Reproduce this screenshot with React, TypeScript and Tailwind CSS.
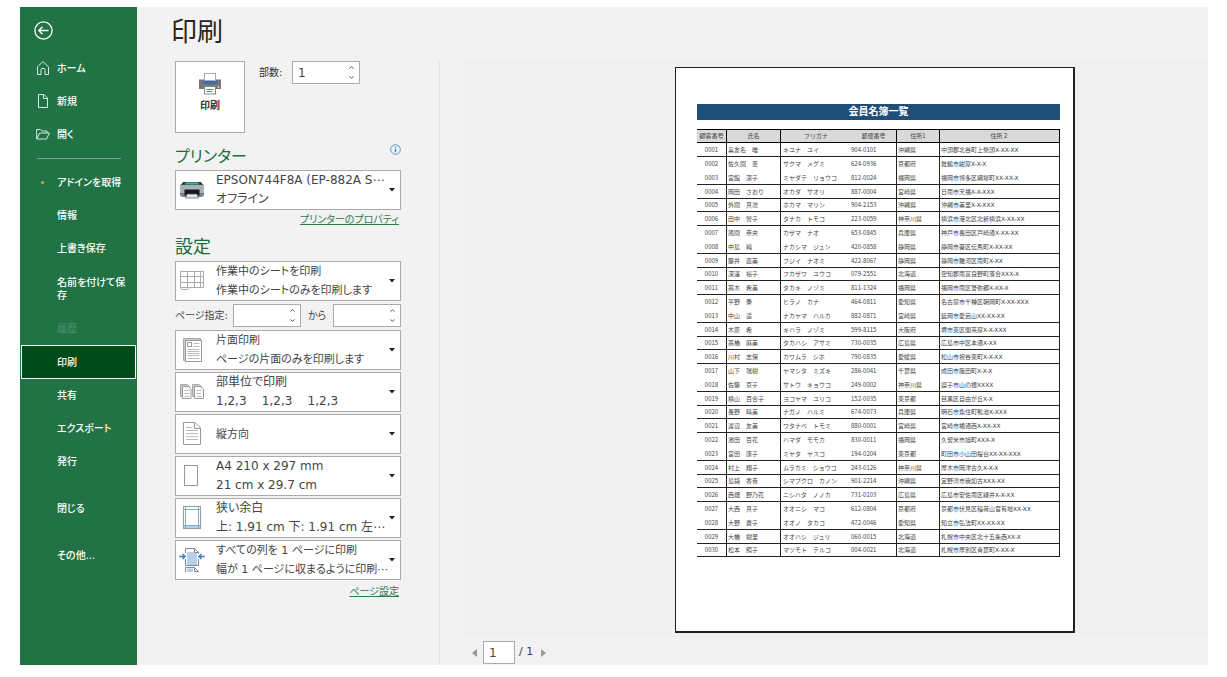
import type { ReactNode } from "react";

type Member = [string, string, string, string, string, string];

const members: Member[] = [
  ["0001", "喜友名　唯", "キユナ　ユイ", "904-0101", "沖縄県", "中頭郡北谷町上勢頭X-XX-XX"],
  ["0002", "佐久間　恵", "サクマ　メグミ", "624-0936", "京都府", "舞鶴市紺屋X-X-X"],
  ["0003", "宮館　涼子", "ミヤダテ　リョウコ", "812-0024", "福岡県", "福岡市博多区綱場町XX-XX-X"],
  ["0004", "岡田　さおり", "オカダ　サオリ", "887-0004", "宮崎県", "日南市天福X-X-XXX"],
  ["0005", "外間　真凛", "ホカマ　マリン", "904-2153", "沖縄県", "沖縄市美里X-X-XXX"],
  ["0006", "田中　智子", "タナカ　トモコ", "223-0059", "神奈川県", "横浜市港北区北新横浜X-XX-XX"],
  ["0007", "風間　奈央", "カザマ　ナオ", "653-0845", "兵庫県", "神戸市長田区戸崎通X-XX-XX"],
  ["0008", "中島　純", "ナカシマ　ジュン", "420-0858", "静岡県", "静岡市葵区伝馬町X-XX-XX"],
  ["0009", "藤井　直美", "フジイ　ナオミ", "422-8067", "静岡県", "静岡市駿河区南町X-XX"],
  ["0010", "深澤　裕子", "フカザワ　ユウコ", "079-2551", "北海道", "空知郡南富良野町落合XXX-X"],
  ["0011", "髙木　希美", "タカキ　ノゾミ", "811-1324", "福岡県", "福岡市南区警弥郷X-XX-X"],
  ["0012", "平野　奏", "ヒラノ　カナ", "464-0811", "愛知県", "名古屋市千種区朝岡町X-XX-XXX"],
  ["0013", "中山　遥", "ナカヤマ　ハルカ", "882-0871", "宮崎県", "延岡市愛宕山XX-XX-XX"],
  ["0014", "木原　希", "キハラ　ノゾミ", "599-8115", "大阪府", "堺市東区関茶屋X-X-XXX"],
  ["0015", "髙橋　麻美", "タカハシ　アサミ", "730-0035", "広島県", "広島市中区本通X-XX"],
  ["0016", "川村　志保", "カワムラ　シホ", "790-0835", "愛媛県", "松山市祝谷東町X-X-XX"],
  ["0017", "山下　瑞樹", "ヤマシタ　ミズキ", "286-0041", "千葉県", "成田市飯田町X-X-X"],
  ["0018", "佐藤　京子", "サトウ　キョウコ", "249-0002", "神奈川県", "逗子市山の根XXXX"],
  ["0019", "横山　百合子", "ヨコヤマ　ユリコ", "152-0035", "東京都", "目黒区自由が丘X-X"],
  ["0020", "長野　晴美", "ナガノ　ハルミ", "674-0073", "兵庫県", "明石市魚住町鴨池X-XXX"],
  ["0021", "渡辺　友美", "ワタナベ　トモミ", "880-0001", "宮崎県", "宮崎市橘通西X-XX-XX"],
  ["0022", "濱田　百花", "ハマダ　モモカ", "830-0011", "福岡県", "久留米市旭町XXX-X"],
  ["0023", "宮田　康子", "ミヤタ　ヤスコ", "194-0204", "東京都", "町田市小山田桜台XX-XX-XXX"],
  ["0024", "村上　翔子", "ムラカミ　ショウコ", "243-0126", "神奈川県", "厚木市岡津古久X-X-X"],
  ["0025", "島袋　香音", "シマブクロ　カノン", "901-2214", "沖縄県", "宜野湾市我如古XXX-XX"],
  ["0026", "西畑　野乃花", "ニシハタ　ノノカ", "731-0103", "広島県", "広島市安佐南区緑井X-X-XX"],
  ["0027", "大西　真子", "オオニシ　マコ", "612-0804", "京都府", "京都市伏見区稲荷山官有地XX-XX"],
  ["0028", "大野　貴子", "オオノ　タカコ", "472-0046", "愛知県", "知立市弘法町XX-XX-XX"],
  ["0029", "大橋　樹里", "オオハシ　ジュリ", "060-0015", "北海道", "札幌市中央区北十五条西XX-X"],
  ["0030", "松本　照子", "マツモト　テルコ", "004-0021", "北海道", "札幌市厚別区青葉町X-XX-X"],
];

const HomeIcon = () => (
  <svg width="14" height="16" viewBox="0 1 14 16" fill="none" stroke="#d5eadc" strokeWidth="1">
    <path d="M1.500 6.800 7 1.600l5.500 5.200V14.500H9V9.500a1 1 0 0 0-1-1H6a1 1 0 0 0-1 1v5H1.500Z" />
  </svg>
);

const NewIcon = () => (
  <svg width="14" height="16" viewBox="0 1 14 16" fill="none" stroke="#d5eadc" strokeWidth="1">
    <path d="M2.500 1.500H8L11.500 5V14.500H2.500ZM7.500 1.500V5.500H11.500" />
  </svg>
);

const OpenIcon = () => (
  <svg width="14" height="16" viewBox="0 1 14 16" fill="none" stroke="#d5eadc" strokeWidth="1">
    <path d="M.7 13V3.500H4.500L6 5H11V7M.7 13 3.800 7H13.400L10.600 13Z" />
  </svg>
);

function NavItem({ children, icon, tall }: { children: ReactNode; icon?: ReactNode; tall?: boolean }) {
  return (
    <button
      type="button"
      className={`flex w-full items-center pl-4 pr-3 text-left text-[10px] leading-[13px] font-medium ${tall ? "h-[47px]" : "h-[33px]"}`}
    >
      <span className="flex w-[21px] shrink-0 items-center">{icon}</span>
      <span className="whitespace-nowrap">{children}</span>
    </button>
  );
}

function Sidebar() {
  return (
    <nav className="flex w-[117px] shrink-0 flex-col bg-[#217346] text-white">
      <button type="button" aria-label="戻る" className="mt-3.5 ml-3.5 size-[19px]">
        <svg width="19" height="19" viewBox="0 0 19 19" fill="none" stroke="#fff" strokeWidth="1.300">
          <circle cx="9.500" cy="9.500" r="8.600" />
          <path d="M14.500 9.500H5M8.500 5.800 4.800 9.500l3.700 3.700" />
        </svg>
      </button>
      <div className="h-3" />
      <NavItem icon={<HomeIcon />}>ホーム</NavItem>
      <NavItem icon={<NewIcon />}>新規</NavItem>
      <NavItem icon={<OpenIcon />}>開く</NavItem>
      <hr className="my-[7px] mr-4 ml-[17px] border-t border-[#6fa886]" />
      <NavItem icon={<span className="ml-[5px] size-[3px] rounded-full bg-[#e8a325]" />}>アドインを取得</NavItem>
      <NavItem>情報</NavItem>
      <NavItem>上書き保存</NavItem>
      <NavItem tall>
        名前を付けて保
        <br />存
      </NavItem>
      <button type="button" disabled className="h-[33px] pl-[37px] text-left text-[10px] text-[#4f9069]">
        履歴
      </button>
      <button
        type="button"
        aria-current="page"
        className="mx-px h-[34px] border border-white bg-[#004b1c] pl-[35px] text-left text-[10px] font-medium"
      >
        印刷
      </button>
      <NavItem>共有</NavItem>
      <NavItem>エクスポート</NavItem>
      <NavItem>発行</NavItem>
      <div className="h-3.5" />
      <NavItem>閉じる</NavItem>
      <div className="h-3.5" />
      <NavItem>その他...</NavItem>
    </nav>
  );
}

function Spinner({ label, value, id }: { label: string; value: string; id: string }) {
  return (
    <span className="flex h-[23px] w-[68px] border border-[#ababab] bg-white">
      <input
        id={id}
        aria-label={label}
        defaultValue={value}
        className="w-0 min-w-0 flex-1 bg-transparent pl-[5px] text-[12px] text-[#444] outline-none"
      />
      <span className="flex w-4 flex-col">
        <button type="button" aria-label={`${label} 増やす`} className="flex flex-1 items-center justify-center">
          <svg width="5" height="3" viewBox="0 0 5 3" fill="none" stroke="#555"><path d="M.5 2.500 2.500.7l2 1.800" /></svg>
        </button>
        <button type="button" aria-label={`${label} 減らす`} className="flex flex-1 items-center justify-center">
          <svg width="5" height="3" viewBox="0 0 5 3" fill="none" stroke="#555"><path d="M.5.500l2 1.800 2-1.800" /></svg>
        </button>
      </span>
    </span>
  );
}

function Picker({ icon, title, detail, compact }: { icon: ReactNode; title: string; detail?: string; compact?: boolean }) {
  return (
    <button
      type="button"
      aria-haspopup="listbox"
      className={`flex h-10 w-full items-center border border-[#ababab] bg-white text-left leading-[19px] text-[#444] ${compact ? "text-[11px]" : "text-[12px]"}`}
    >
      <span className="flex w-10 shrink-0 items-center pl-[3px]">{icon}</span>
      <span className="min-w-0 flex-1 whitespace-nowrap">
        <span className="block">{title}</span>
        {detail && <span className="block whitespace-pre">{detail}</span>}
      </span>
      <svg className="mr-[5px] shrink-0" width="6" height="4" viewBox="0 0 6 4"><path d="M0 0H6L3 3.500Z" fill="#222" /></svg>
    </button>
  );
}

const PrintIcon = () => (
  <svg width="24" height="22" viewBox="0 0 24 22">
    <path d="M1 6.500H5V10H19V6.500H23V16H1Z" fill="#777" />
    <path d="M5 6.500H19V11H5Z" fill="#3a6ea8" />
    <rect x="6.500" y=".5" width="11" height="7" fill="#fff" stroke="#aaa" />
    <circle cx="20.500" cy="14" r="1" fill="#f6c9a0" />
    <rect x="6.500" y="13.500" width="11" height="7.500" fill="#fff" stroke="#888" />
    <path d="M8.500 16.500H15.500M8.500 18.500H14" stroke="#4a86c8" />
  </svg>
);

const DeviceIcon = () => (
  <svg width="26" height="20" viewBox="0 0 26 20">
    <path d="M4 2H22L25 6H1Z" fill="#3c4246" />
    <path d="M7 2.500H19L20 4.500H6Z" fill="#38b796" />
    <rect x="1" y="5" width="24" height="11" rx="1" fill="#a9b0b6" />
    <path d="M1 13H25V15.500L23 17H3L1 15.500Z" fill="#7b8389" />
    <rect x="5.500" y="9.500" width="15" height="6" fill="#17191b" />
    <path d="M8 14H18L19.500 18H6.500Z" fill="#dfe3e6" stroke="#444" strokeWidth=".6" />
  </svg>
);

const SheetIcon = () => (
  <svg width="26" height="24" viewBox="0 0 26 24" fill="none" stroke="#aaa">
    <path d="M1.500 2.500H24.500V18.500H10.500L8.500 20.500H2.500L1.500 18.500ZM1.500 7.500H24.500M1.500 13.500H24.500M1.500 18.500H10.500M8.500 2.500V18.500M15.500 2.500V18.500M21.500 2.500V18.500" />
  </svg>
);

const OneSideIcon = () => (
  <svg width="26" height="28" viewBox="0 0 26 28" fill="none" stroke="#999">
    <path d="M4.500 24.500V2.500H21.500V24.500Z" fill="#ccc" stroke="#aaa" />
    <rect x="6.500" y="4.500" width="16" height="21" fill="#fff" />
    <path d="M8.500 6.500H12.500V10.500H8.500Z" />
    <path d="M14.500 7.500H20.500M14.500 10.500H20.500M8.500 13.500H20.500M8.500 15.500H20.500M8.500 17.500H20.500M8.500 19.500H20.500M8.500 22.500H20.500" stroke="#bbb" />
  </svg>
);

const CollateIcon = () => (
  <svg width="26" height="18" viewBox="0 0 26 18" fill="none" stroke="#999">
    <path d="M1.500 13.500V1.500H8.500L10.500 3.500V13.500ZM13.500 13.500V1.500H20.500L22.500 3.500V13.500Z" fill="#ccc" stroke="#aaa" />
    <path d="M3.500 3.500H9.500L12 6V15.500H3.500ZM15.500 3.500H21.500L24.500 6V15.500H15.500Z" fill="#fff" />
    <path d="M5.500 7.500H10.500M5.500 10.500H10.500M5.500 13.500H10.500M17.500 7.500H22.500M17.500 10.500H22.500M17.500 13.500H22.500" stroke="#bbb" />
  </svg>
);

const PortraitIcon = () => (
  <svg width="26" height="26" viewBox="0 0 26 26" fill="none" stroke="#999">
    <path d="M4.500 1.500H16L21.500 7V23.500H4.500ZM15.500 1.500V7.500H21.500" />
    <path d="M7 6.500H13M7 9.500H19M7 12.500H19M7 15.500H19M7 18.500H19" stroke="#bbb" />
  </svg>
);

const PaperIcon = () => (
  <svg width="26" height="24" viewBox="0 0 26 24" fill="none" stroke="#999">
    <rect x="5.500" y="1.500" width="13" height="20" />
  </svg>
);

const MarginIcon = () => (
  <svg width="26" height="26" viewBox="0 0 26 26" fill="none">
    <rect x="4.500" y="1.500" width="17" height="22" fill="#fff" stroke="#999" />
    <path d="M5 22H21" stroke="#b9cfe8" strokeWidth="2" />
    <path d="M4 4.500H22M4 20.500H22M6.500 1V24M19.500 1V24" stroke="#7facdf" />
  </svg>
);

const FitIcon = () => (
  <svg width="26" height="26" viewBox="0 0 26 26" fill="none">
    <path d="M8 5H18V18H8Z" fill="#b5cfec" />
    <path d="M6.500 6V1.500H15.500L19.500 5.500V7M6.500 12V18.500H19.500V12" stroke="#888" />
    <path d="M15.500 1.500V5.500H19.500Z" fill="#fff" stroke="#888" />
    <path d="M8 21.500H14V25H8Z" fill="#b5cfec" />
    <path d="M6.500 25V20.500H15.500L19.500 24.500H15.500V20.500" stroke="#888" />
    <path d="M0 9.500H6M3.500 7 6 9.500 3.500 12M26 9.500H20M22.500 7 20 9.500l2.500 2.500" stroke="#3f7fc1" strokeWidth="1.600" />
  </svg>
);

function Settings() {
  return (
    <section className="w-[226px] shrink-0">
      <div className="flex">
        <button
          type="button"
          className="flex h-[72px] w-[70px] flex-col items-center border border-[#ababab] bg-white pt-[11px] text-[10px] leading-4 font-bold text-[#333]"
        >
          <PrintIcon />
          <span className="mt-[3px]">印刷</span>
        </button>
        <label htmlFor="copies" className="ml-3.5 w-[33px] text-[10px] leading-[23px] whitespace-nowrap text-[#333]">
          部数:
        </label>
        <Spinner id="copies" label="部数" value="1" />
      </div>

      <div className="mt-[9px] flex h-7 items-center justify-between">
        <h2 className="pt-0.5 text-[16px] leading-7 text-[#1d6b3e]">プリンター</h2>
        <button type="button" aria-label="プリンターの情報" className="mb-3.5">
          <svg width="11" height="11" viewBox="0 0 11 11" fill="none">
            <circle cx="5.500" cy="5.500" r="4.800" stroke="#4a9ad4" />
            <path d="M5.500 4.800V8.300M5.500 2.500V3.800" stroke="#2b7fc0" strokeWidth="1.300" />
          </svg>
        </button>
      </div>
      <Picker icon={<DeviceIcon />} title="EPSON744F8A (EP-882A S⋯" detail="オフライン" />
      <div className="flex h-5 items-center justify-end pr-0.5">
        <a href="#properties" className="text-[10px] leading-4 text-[#2c7a4e] underline">プリンターのプロパティ</a>
      </div>

      <h2 className="mt-1 mb-px text-[18px] leading-[26px] text-[#1d6b3e]">設定</h2>
      <Picker compact icon={<SheetIcon />} title="作業中のシートを印刷" detail="作業中のシートのみを印刷します" />
      <div className="my-[3px] flex items-center text-[10px] text-[#444]">
        <label htmlFor="from" className="w-[58px] whitespace-nowrap">ページ指定:</label>
        <Spinner id="from" label="開始ページ" value="" />
        <label htmlFor="to" className="flex-1 text-center">から</label>
        <Spinner id="to" label="終了ページ" value="" />
      </div>
      <div className="flex flex-col gap-0.5">
        <Picker compact icon={<OneSideIcon />} title="片面印刷" detail="ページの片面のみを印刷します" />
        <Picker icon={<CollateIcon />} title="部単位で印刷" detail="1,2,3    1,2,3    1,2,3" />
        <Picker compact icon={<PortraitIcon />} title="縦方向" />
        <Picker icon={<PaperIcon />} title="A4 210 x 297 mm" detail="21 cm x 29.7 cm" />
        <Picker icon={<MarginIcon />} title="狭い余白" detail="上: 1.91 cm 下: 1.91 cm 左⋯" />
        <Picker compact icon={<FitIcon />} title="すべての列を 1 ページに印刷" detail="幅が 1 ページに収まるように印刷⋯" />
      </div>
      <div className="mt-0.5 flex h-5 items-center justify-end pr-0.5">
        <a href="#page-setup" className="text-[10px] leading-4 text-[#2c7a4e] underline">ページ設定</a>
      </div>
    </section>
  );
}

function MemberSheet() {
  const head = "border-y border-black bg-[#d9d9d9] p-0 font-normal";
  return (
    <div className="h-[566px] w-[400px] border border-r-2 border-b-2 border-[#222] bg-white pt-9 pr-3.5 pl-[21px] font-['Noto_Sans_CJK_JP',sans-serif] text-[6px] text-[#444] [font-feature-settings:normal]">
      <h3 className="h-4 w-[363px] bg-[#1f4e79] text-center text-[10px] leading-[14px] font-bold text-white">会員名簿一覧</h3>
      <table className="mt-[9px] w-[363px] table-fixed border-separate border-spacing-0 leading-[10px] whitespace-nowrap">
        <colgroup>
          <col className="w-[30px]" />
          <col className="w-[54px]" />
          <col className="w-[70px]" />
          <col className="w-[46px]" />
          <col className="w-[43px]" />
          <col className="w-[120px]" />
        </colgroup>
        <thead>
          <tr className="h-3.5">
            <th className={`${head} border-r`}>顧客番号</th>
            <th className={`${head} border-r`}>氏名</th>
            <th className={head}>フリガナ</th>
            <th className={`${head} border-r`}>郵便番号</th>
            <th className={`${head} border-r`}>住所1</th>
            <th className={`${head} border-r`}>住所２</th>
          </tr>
        </thead>
        <tbody>
          {members.map((m, i) => {
            const line = i % 5 === 1 ? "" : "border-b border-b-[#222]";
            return (
              <tr key={m[0]} className={i % 5 === 4 ? "h-[13px]" : "h-[14px]"}>
                <td className={`${line} border-r border-r-[#222] p-0 text-center`}>{m[0]}</td>
                <td className={`${line} border-r border-r-[#222] p-0 pl-px`}>{m[1]}</td>
                <td className={`${line} p-0 pl-0.5`}>{m[2]}</td>
                <td className={`${line} border-r border-r-[#222] p-0`}>{m[3]}</td>
                <td className={`${line} border-r border-r-[#222] p-0 pl-px`}>{m[4]}</td>
                <td className={`${line} border-r border-r-[#222] p-0 pl-px font-['DejaVu_Sans','Noto_Sans_CJK_JP',sans-serif]`}>{m[5]}</td>
              </tr>
            );
          })}
        </tbody>
      </table>
    </div>
  );
}

function Preview() {
  return (
    <section className="flex flex-1 flex-col pl-[25px]">
      <div className="flex h-[576px] justify-center bg-[#f0f0f0] pt-1.5 pl-[77px]">
        <MemberSheet />
      </div>
      <div className="mt-1 flex items-center pl-[7px] text-[12px] text-[#444]">
        <button type="button" aria-label="前のページ">
          <svg width="5" height="8" viewBox="0 0 5 8"><path d="M5 0V8L0 4Z" fill="#999" /></svg>
        </button>
        <input
          aria-label="ページ番号"
          defaultValue="1"
          className="ml-1.5 h-[23px] w-8 border border-[#ababab] bg-white pl-[5px] outline-none"
        />
        <span className="ml-1 text-[11px]">/ 1</span>
        <button type="button" aria-label="次のページ" className="ml-2">
          <svg width="5" height="8" viewBox="0 0 5 8"><path d="M0 0V8L5 4Z" fill="#999" /></svg>
        </button>
      </div>
    </section>
  );
}

export default function App() {
  return (
    <div
      lang="ja"
      className="flex min-h-screen bg-white pt-[7px] pr-[19px] pb-3 pl-5 font-['DejaVu_Sans','Noto_Sans_CJK_JP',sans-serif] [font-feature-settings:'palt']"
    >
      <Sidebar />
      <main className="flex flex-1 flex-col bg-[#f2f2f2]">
        <h1 className="h-[54px] pl-[34px] text-[26px] leading-[50px] text-[#262626]">印刷</h1>
        <div className="flex flex-1">
          <div className="border-r border-[#e3e3e3] pr-[38px] pl-[38px]">
            <Settings />
          </div>
          <Preview />
        </div>
      </main>
    </div>
  );
}
